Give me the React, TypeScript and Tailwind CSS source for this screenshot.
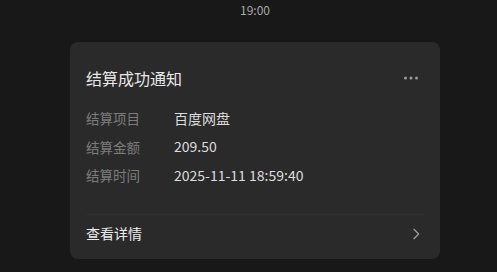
export default function App() {
  const rows = [
    ["结算项目", "百度网盘"],
    ["结算金额", "209.50"],
    ["结算时间", "2025-11-11 18:59:40"],
  ];
  return (
    <div
      className="flex h-[272px] w-full flex-col items-center overflow-hidden bg-[#181818] pl-[13px]"
      style={{ fontFamily: '"Noto Sans CJK SC", "Noto Sans", sans-serif' }}
    >
      <div className="pt-[1px] text-[12px] leading-[18px] text-[#a8a8a8]">19:00</div>
      <div className="mt-[23px] w-[370px] rounded-lg bg-[#2a2a2a]">
        <div className="flex items-center justify-between px-4 pt-6">
          <div className="text-[16px] leading-[24px] text-[#e8e8e8]">结算成功通知</div>
          <svg width="16" height="4" viewBox="0 0 16 4" className="mr-[5px] text-[#9a9a9a]">
            <circle cx="2.5" cy="2" r="1.5" fill="currentColor" />
            <circle cx="8" cy="2" r="1.5" fill="currentColor" />
            <circle cx="13.5" cy="2" r="1.5" fill="currentColor" />
          </svg>
        </div>
        <div className="flex flex-col px-4 pt-[14px] pb-[24px]">
          {rows.map(([k, v]) => (
            <div key={k} className="flex h-[28.5px] items-center">
              <span className="w-[88px] text-[13.5px] text-[#7c7c7c]">{k}</span>
              <span className="text-[14px] text-[#dcdcdc]">{v}</span>
            </div>
          ))}
        </div>
        <div className="mx-4 border-t border-[#303030]" />
        <div className="flex h-[44px] items-center justify-between px-4 pb-[6px]">
          <span className="text-[14px] text-[#ececec]">查看详情</span>
          <svg width="16" height="16" viewBox="0 0 24 24" fill="none" stroke="#9a9a9a" strokeWidth="2" strokeLinecap="round" strokeLinejoin="round">
            <path d="m9 5 7 7-7 7" />
          </svg>
        </div>
      </div>
    </div>
  );
}
